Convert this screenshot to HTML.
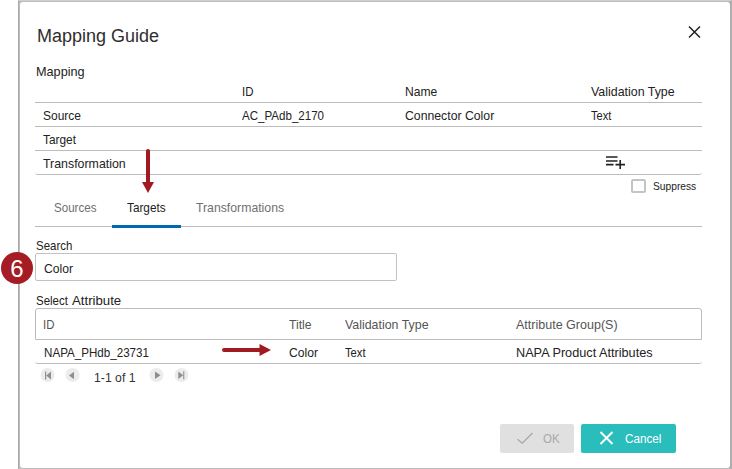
<!DOCTYPE html>
<html><head><meta charset="utf-8">
<style>
*{box-sizing:border-box;margin:0;padding:0}
html,body{width:732px;height:469px;overflow:hidden;background:#fff;font-family:"Liberation Sans",sans-serif;color:#222;}
.abs{position:absolute;white-space:nowrap}
#dlg{position:absolute;left:18px;top:0;width:714px;height:469px;border-left:1px solid #a8a8a8;border-right:2px solid #aeaeae;border-top:1px solid #d0d0d0;border-bottom:1px solid #bdbdbd;box-shadow:inset 1px 1px 0 #bdbdbd;background:#fff}
.t{position:absolute;white-space:nowrap;font-size:12.7px;line-height:16px;transform-origin:0 0}
.hl{position:absolute;height:1px;background:#bcbcbc}
</style></head><body>
<div id="dlg"></div>
<svg class="abs" style="left:0;top:0" width="732" height="469"><path d="M20 2H23A3 3 0 0 0 20 5Z" fill="#bdbdbd"/><path d="M730 2V5A3 3 0 0 0 727 2Z" fill="#aeaeae"/><path d="M730 468H727A3 3 0 0 0 730 465Z" fill="#aeaeae"/><path d="M20 468V465A3 3 0 0 0 23 468Z" fill="#bdbdbd"/></svg>
<div class="t" style="left:37px;top:25px;font-size:18px;line-height:22px;color:#2e2e2e">Mapping Guide</div>
<svg class="abs" style="left:687px;top:25px" width="14" height="14" viewBox="0 0 14 14"><path d="M2 1.5L13 12.5M13 1.5L2 12.5" stroke="#222" stroke-width="1.5"/></svg>

<div class="t" style="left:36px;top:64px">Mapping</div>
<div class="t" style="left:242px;top:84px;transform:scaleX(0.9)">ID</div>
<div class="t" style="left:405px;top:84px;transform:scaleX(0.953)">Name</div>
<div class="t" style="left:591px;top:84px;transform:scaleX(0.977)">Validation Type</div>
<div class="hl" style="left:35px;top:102px;width:667px"></div>
<div class="t" style="left:43px;top:108px;transform:scaleX(0.943)">Source</div>
<div class="t" style="left:242px;top:108px;transform:scaleX(0.911)">AC_PAdb_2170</div>
<div class="t" style="left:405px;top:108px;transform:scaleX(0.966)">Connector Color</div>
<div class="t" style="left:591px;top:108px;transform:scaleX(0.875)">Text</div>
<div class="hl" style="left:35px;top:126px;width:667px"></div>
<div class="t" style="left:43px;top:132px;transform:scaleX(0.936)">Target</div>
<div class="hl" style="left:35px;top:150px;width:667px"></div>
<div class="t" style="left:43px;top:156px;transform:scaleX(0.975)">Transformation</div>
<div class="abs" style="left:35px;top:171px;width:667px;height:4px;border-bottom:1px solid #bcbcbc;border-radius:0 0 3px 3px"></div>
<svg class="abs" style="left:604px;top:154px" width="24" height="18" viewBox="0 0 24 18"><path d="M2 3H13.5M2 7H13.5M2 10.6H9.5M11.5 10.6H21M16.2 6V15" stroke="#222" stroke-width="1.6" fill="none"/></svg>

<div class="abs" style="left:631px;top:179px;width:15px;height:14px;border:2px solid #c4c4c4;border-radius:2px"></div>
<div class="t" style="left:653px;top:179px;font-size:11px;line-height:14px;transform:scaleX(0.93)">Suppress</div>

<!-- tabs -->
<div class="t" style="left:54px;top:200px;color:#707070;transform:scaleX(0.913)">Sources</div>
<div class="t" style="left:127px;top:200px;color:#222;transform:scaleX(0.929)">Targets</div>
<div class="t" style="left:196px;top:200px;color:#707070;transform:scaleX(0.966)">Transformations</div>
<div class="hl" style="left:35px;top:226px;width:667px"></div>
<div class="abs" style="left:112px;top:225px;width:69px;height:3px;background:#0068b0"></div>

<!-- search -->
<div class="t" style="left:36px;top:238px;transform:scaleX(0.903)">Search</div>
<div class="abs" style="left:35px;top:253px;width:362px;height:28px;border:1px solid #c2c2c2;border-radius:2px"></div>
<div class="t" style="left:44px;top:261px;transform:scaleX(0.958)">Color</div>

<!-- badge -->
<div class="abs" style="left:1px;top:252px;width:32px;height:32px;border-radius:50%;background:#a51c24"></div>
<div class="abs" style="left:0;top:255px;width:34px;text-align:center;font-size:24px;line-height:28px;color:#fff">6</div>

<!-- grid -->
<div class="t" style="left:36px;top:293px;transform:scaleX(0.905)">Select</div><div class="t" style="left:72px;top:293px;transform:scaleX(1.04)">Attribute</div>
<div class="abs" style="left:35px;top:308px;width:667px;height:32px;border:1px solid #bcbcbc;border-radius:3px 3px 0 0"></div>
<div class="t" style="left:43px;top:317px;color:#555;transform:scaleX(0.9)">ID</div>
<div class="t" style="left:289px;top:317px;color:#555;transform:scaleX(0.963)">Title</div>
<div class="t" style="left:345px;top:317px;color:#555;transform:scaleX(0.976)">Validation Type</div>
<div class="t" style="left:516px;top:317px;color:#555;transform:scaleX(0.987)">Attribute Group(S)</div>
<div class="abs" style="left:35px;top:359px;width:667px;height:5px;border-bottom:1px solid #bcbcbc;border-radius:0 0 3px 3px"></div>
<div class="t" style="left:44px;top:345px;transform:scaleX(0.915)">NAPA_PHdb_23731</div>
<div class="t" style="left:289px;top:345px;transform:scaleX(0.958)">Color</div>
<div class="t" style="left:345px;top:345px;transform:scaleX(0.883)">Text</div>
<div class="t" style="left:516px;top:345px">NAPA Product Attributes</div>

<!-- pager -->
<svg class="abs" style="left:38px;top:366px" width="160" height="18" viewBox="0 0 160 18">
<circle cx="9.5" cy="9" r="7" fill="#ececec"/>
<rect x="7" y="5.5" width="1.2" height="8" fill="#8e8e8e"/><path d="M8.2 9.5L13 5.5V13.5Z" fill="#8e8e8e"/>
<circle cx="34.5" cy="9" r="7" fill="#ececec"/>
<path d="M31 9.5L36 5.8V13.2Z" fill="#8e8e8e"/>
<circle cx="118.5" cy="9" r="7" fill="#ececec"/>
<path d="M122.5 9.25L117 5.5V13Z" fill="#8e8e8e"/>
<circle cx="143.5" cy="9" r="7" fill="#ececec"/>
<rect x="145.2" y="5.3" width="1.1" height="8" fill="#8e8e8e"/><path d="M145.2 9.3L140.3 5.5V13.1Z" fill="#8e8e8e"/>
</svg>
<div class="t" style="left:94px;top:370px;font-size:12.7px;color:#333;transform:scaleX(0.966)">1-1 of 1</div>

<!-- buttons -->
<div class="abs" style="left:500px;top:424px;width:74px;height:29px;background:#e0e0e0;border-radius:2px"></div>
<svg class="abs" style="left:514px;top:430px" width="22" height="16" viewBox="0 0 22 16"><path d="M3.5 9.2L8.3 13.2L18.5 3" stroke="#a8a8a8" stroke-width="1.35" fill="none"/></svg>
<div class="t" style="left:543px;top:431px;color:#a8a8a8;transform:scaleX(0.911)">OK</div>
<div class="abs" style="left:581px;top:424px;width:95px;height:29px;background:#29bdbc;border-radius:2px"></div>
<svg class="abs" style="left:598px;top:430px" width="17" height="17" viewBox="0 0 17 17"><path d="M2.5 2L14.5 14M14.5 2L2.5 14" stroke="#fff" stroke-width="2" fill="none"/></svg>
<div class="t" style="left:625px;top:431px;color:#fff;transform:scaleX(0.923)">Cancel</div>

<!-- red arrows -->
<svg class="abs" style="left:136px;top:145px" width="24" height="52" viewBox="0 0 24 52"><path d="M12 6V38" stroke="#a11a22" stroke-width="4" stroke-linecap="round"/><path d="M6 37H18L12 48Z" fill="#a11a22"/></svg>
<svg class="abs" style="left:218px;top:338px" width="58" height="24" viewBox="0 0 58 24"><path d="M6 12H42" stroke="#a11a22" stroke-width="4" stroke-linecap="round"/><path d="M41.5 6V18L53 12Z" fill="#a11a22"/></svg>
</body></html>
